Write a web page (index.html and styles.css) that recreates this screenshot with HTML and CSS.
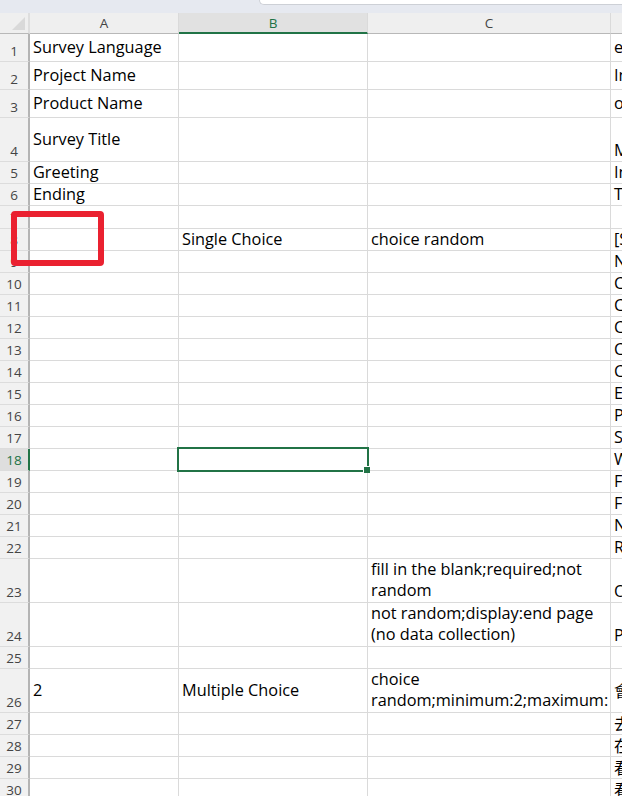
FILE: index.html
```html
<!DOCTYPE html>
<html lang="en">
<head>
<meta charset="utf-8">
<title>Survey sheet</title>
<link rel="stylesheet" href="styles.css">
</head>
<body>
<div class="topbar"><div class="tab"></div></div>
<div class="sheet">
  <div class="row head">
    <div class="corner"></div>
    <div class="colh">A</div>
    <div class="colh active">B</div>
    <div class="colh">C</div>
    <div class="colh">D</div>
  </div>
  <div class="row h28"><div class="rh">1</div><div class="c">Survey Language</div><div class="c"></div><div class="c"></div><div class="c">english</div></div>
  <div class="row h28"><div class="rh">2</div><div class="c">Project Name</div><div class="c"></div><div class="c"></div><div class="c">Interest Survey</div></div>
  <div class="row h28"><div class="rh">3</div><div class="c">Product Name</div><div class="c"></div><div class="c"></div><div class="c">online</div></div>
  <div class="row h44"><div class="rh">4</div><div class="c">Survey Title</div><div class="c"></div><div class="c"></div><div class="c bot">My Hobbies</div></div>
  <div class="row"><div class="rh">5</div><div class="c">Greeting</div><div class="c"></div><div class="c"></div><div class="c">Info</div></div>
  <div class="row"><div class="rh">6</div><div class="c">Ending</div><div class="c"></div><div class="c"></div><div class="c">Thank you</div></div>
  <div class="row h23"><div class="rh">7</div><div class="c"></div><div class="c"></div><div class="c"></div><div class="c"></div></div>
  <div class="row"><div class="rh">8</div><div class="c"></div><div class="c">Single Choice</div><div class="c">choice random</div><div class="c">[Single]</div></div>
  <div class="row"><div class="rh">9</div><div class="c"></div><div class="c"></div><div class="c"></div><div class="c">None</div></div>
  <div class="row"><div class="rh">10</div><div class="c"></div><div class="c"></div><div class="c"></div><div class="c">Cooking</div></div>
  <div class="row"><div class="rh">11</div><div class="c"></div><div class="c"></div><div class="c"></div><div class="c">Cycling</div></div>
  <div class="row"><div class="rh">12</div><div class="c"></div><div class="c"></div><div class="c"></div><div class="c">Camping</div></div>
  <div class="row"><div class="rh">13</div><div class="c"></div><div class="c"></div><div class="c"></div><div class="c">Chess</div></div>
  <div class="row"><div class="rh">14</div><div class="c"></div><div class="c"></div><div class="c"></div><div class="c">Crafts</div></div>
  <div class="row"><div class="rh">15</div><div class="c"></div><div class="c"></div><div class="c"></div><div class="c">Eating</div></div>
  <div class="row"><div class="rh">16</div><div class="c"></div><div class="c"></div><div class="c"></div><div class="c">Painting</div></div>
  <div class="row"><div class="rh">17</div><div class="c"></div><div class="c"></div><div class="c"></div><div class="c">Swimming</div></div>
  <div class="row"><div class="rh active">18</div><div class="c"></div><div class="c sel"></div><div class="c"></div><div class="c">Walking</div></div>
  <div class="row"><div class="rh">19</div><div class="c"></div><div class="c"></div><div class="c"></div><div class="c">Fishing</div></div>
  <div class="row"><div class="rh">20</div><div class="c"></div><div class="c"></div><div class="c"></div><div class="c">Football</div></div>
  <div class="row"><div class="rh">21</div><div class="c"></div><div class="c"></div><div class="c"></div><div class="c">Net surfing</div></div>
  <div class="row"><div class="rh">22</div><div class="c"></div><div class="c"></div><div class="c"></div><div class="c">Reading</div></div>
  <div class="row h44"><div class="rh">23</div><div class="c"></div><div class="c"></div><div class="c lines">fill in the blank;required;not<br>random</div><div class="c bot">Other</div></div>
  <div class="row h44"><div class="rh">24</div><div class="c"></div><div class="c"></div><div class="c lines">not random;display:end page<br>(no data collection)</div><div class="c bot">Page end</div></div>
  <div class="row"><div class="rh">25</div><div class="c"></div><div class="c"></div><div class="c"></div><div class="c"></div></div>
  <div class="row h44"><div class="rh">26</div><div class="c">2</div><div class="c">Multiple Choice</div><div class="c lines">choice<br>random;minimum:2;maximum:</div><div class="c cjk">會做的運動</div></div>
  <div class="row"><div class="rh">27</div><div class="c"></div><div class="c"></div><div class="c"></div><div class="c cjk">去健身房</div></div>
  <div class="row"><div class="rh">28</div><div class="c"></div><div class="c"></div><div class="c"></div><div class="c cjk">在家锻炼</div></div>
  <div class="row"><div class="rh">29</div><div class="c"></div><div class="c"></div><div class="c"></div><div class="c cjk">看电影</div></div>
  <div class="row"><div class="rh">30</div><div class="c"></div><div class="c"></div><div class="c"></div><div class="c cjk">看书</div></div>
</div>
<div class="mark"></div>
</body>
</html>
```

FILE: styles.css
```css
html, body {
  margin: 0;
  padding: 0;
  height: 100%;
  overflow: hidden;
  background: #ffffff;
}

body {
  font-family: "Open Sans", "Liberation Sans", sans-serif;
  color: #000;
}

* {
  box-sizing: border-box;
}

.topbar {
  height: 13px;
  background: #e6e9f0;
  display: flex;
  justify-content: flex-end;
}

.tab {
  width: 363px;
  height: 5px;
  background: #ffffff;
  border-left: 1px solid #cdd0d6;
  border-bottom: 1px solid #cdd0d6;
  border-bottom-left-radius: 6px;
}

.sheet {
  overflow: hidden;
}

.row {
  display: grid;
  grid-template-columns: 30px 149px 189px 243px 240px;
  height: 22px;
}

.row.h28 { height: 28px; }
.row.h44 { height: 44px; }
.row.h23 { height: 23px; }
.row.head { height: 21px; }

.corner {
  background: #efefef;
  border-right: 2px solid #dedede;
  border-bottom: 1px solid #b8b8b8;
  display: flex;
  justify-content: flex-end;
  align-items: flex-end;
  padding: 0 3px 3px 0;
}

.corner::after {
  content: "";
  width: 13px;
  height: 13px;
  background: #d9d9d9;
  clip-path: polygon(100% 0, 100% 100%, 0 100%);
}

.colh {
  background: #efefef;
  border-right: 1px solid #dadada;
  border-bottom: 1px solid #b8b8b8;
  display: flex;
  align-items: center;
  justify-content: center;
  font-size: 13.5px;
  color: #444;
  overflow: hidden;
}

.colh.active {
  background: #e1e1e1;
  color: #217346;
  border-bottom: 2px solid #217346;
}

.rh {
  background: #f1f1f1;
  border-right: 2px solid #b4b4b4;
  border-bottom: 1px solid #dcdcdc;
  display: flex;
  align-items: flex-end;
  justify-content: center;
  font-size: 13.5px;
  line-height: 17px;
  padding-bottom: 1px;
  color: #444;
}

.rh.active {
  background: #dedede;
  border-right-color: #217346;
  color: #217346;
}

.c {
  border-right: 1px solid #dadada;
  border-bottom: 1px solid #dadada;
  padding: 0 3px 2px;
  display: flex;
  align-items: center;
  overflow: hidden;
  white-space: nowrap;
  font-size: 16.3px;
}

.c.bot {
  align-items: flex-end;
  padding-bottom: 0;
}

.c.lines {
  line-height: 21.5px;
  padding-bottom: 1px;
}

.c.cjk {
  font-family: "Noto Sans CJK SC", "Noto Sans CJK TC", sans-serif;
  font-size: 16px;
}

.c.sel {
  position: relative;
  overflow: visible;
}

.c.sel::after {
  content: "";
  position: absolute;
  inset: -2px;
  border: 2px solid #217346;
  z-index: 2;
}

.c.sel::before {
  content: "";
  position: absolute;
  right: -3px;
  bottom: -3px;
  width: 6px;
  height: 6px;
  background: #217346;
  box-shadow: -1px -1px 0 0 #ffffff;
  z-index: 3;
}

.mark {
  position: absolute;
  left: 11px;
  top: 211px;
  width: 93px;
  height: 55px;
  border: 6px solid #ea2130;
  border-radius: 4px;
}
```
